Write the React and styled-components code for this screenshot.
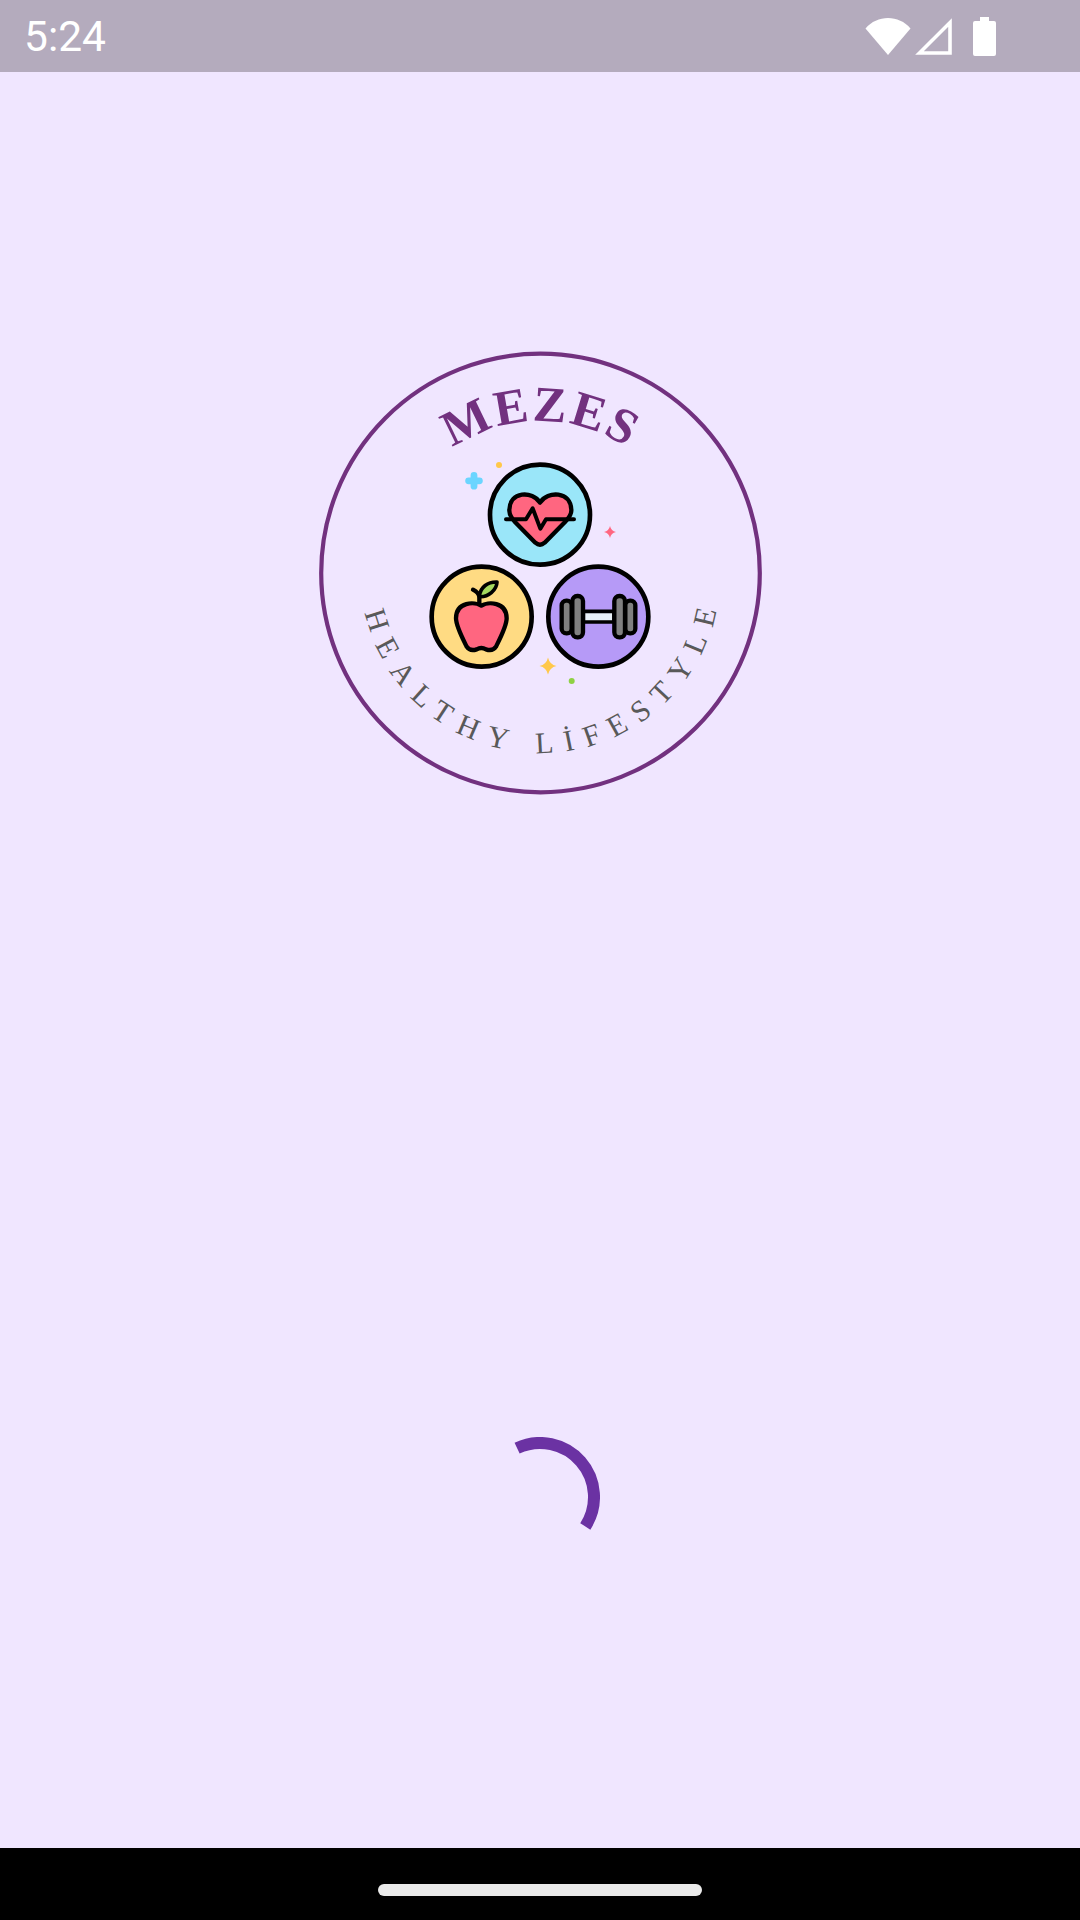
import React from "react";
import styled, { createGlobalStyle } from "styled-components";

const Global = createGlobalStyle`
  html, body { margin: 0; padding: 0; background: #f0e6ff; }
  #root { width: 1080px; height: 1920px; }
`;

const Screen = styled.div`
  width: 1080px;
  height: 1920px;
  display: flex;
  flex-direction: column;
  background: #f0e6ff;
  overflow: hidden;
`;

const StatusBar = styled.header`
  flex: 0 0 72px;
  display: flex;
  align-items: center;
  justify-content: space-between;
  padding: 0 84px 0 24px;
  background: #b4abbd;
`;

const Clock = styled.span`
  font-family: Roboto, sans-serif;
  font-size: 42.5px;
  line-height: 72px;
  color: #fff;
  position: relative;
  top: 1px;
`;

const StatusIcons = styled.div`
  display: flex;
  align-items: center;
  height: 72px;
  gap: 4px;
`;

const BatteryWrap = styled.div`
  display: flex;
  margin-left: 17px;
`;

const Main = styled.main`
  flex: 1;
  display: flex;
  flex-direction: column;
  align-items: center;
  padding-top: 268px;
`;

const LogoSvg = styled.svg`
  display: block;
  width: 460px;
  height: 460px;
`;

const Title = styled.text`
  font-family: "Liberation Serif", serif;
  font-weight: 700;
  font-size: 50px;
  letter-spacing: 2.4px;
  fill: #72317f;
`;

const Tagline = styled.text`
  font-family: "Liberation Serif", serif;
  font-size: 30px;
  letter-spacing: 11.6px;
  fill: #595959;
`;

const Spinner = styled.svg`
  display: block;
  width: 120px;
  height: 120px;
  margin-top: 637px;
`;

const NavBar = styled.footer`
  flex: 0 0 72px;
  display: flex;
  justify-content: center;
  align-items: flex-start;
  padding-top: 36px;
  box-sizing: border-box;
  background: #000;
`;

const HomePill = styled.div`
  width: 324px;
  height: 12px;
  border-radius: 6px;
  background: #eaeaea;
`;

const Sparkle = ({ x, y, r, fill }) => (
  <path
    d={`M${x} ${y - r}Q${x + r * 0.18} ${y - r * 0.18} ${x + r} ${y}Q${x + r * 0.18} ${y + r * 0.18} ${x} ${y + r}Q${x - r * 0.18} ${y + r * 0.18} ${x - r} ${y}Q${x - r * 0.18} ${y - r * 0.18} ${x} ${y - r}Z`}
    fill={fill}
  />
);

const Logo = () => (
  <LogoSvg viewBox="0 0 460 460">
    <defs>
      <path id="titleArc" d="M78.5 233A152 152 0 0 1 382.5 233" />
      <path id="tagArc" d="M50.5 233A180 180 0 0 0 410.5 233" />
    </defs>
    <circle cx="230.5" cy="233" r="219.3" fill="none" stroke="#72317f" strokeWidth="4.2" />
    <Title textAnchor="middle">
      <textPath href="#titleArc" startOffset="50%">MEZES</textPath>
    </Title>
    <Tagline textAnchor="middle">
      <textPath href="#tagArc" startOffset="51.2%">HEALTHY LİFESTYLE</textPath>
    </Tagline>

    <g transform="translate(110 100) scale(0.33333)" strokeLinejoin="round" strokeLinecap="round">
      {/* heart badge */}
      <circle cx="360" cy="224" r="150" fill="#9ae6f9" stroke="#000" strokeWidth="14" />
      <path
        d="M360 188C338 152 268 152 268 212C268 226 276 236 285 246L346 308Q360 320 374 308L435 246C444 236 454 226 454 212C454 152 382 152 360 188Z"
        fill="#ff6680"
        stroke="#000"
        strokeWidth="13"
      />
      <path d="M258 238H318L338 205L361 266L378 238H462" fill="none" stroke="#000" strokeWidth="12" />

      {/* apple badge */}
      <circle cx="185" cy="530" r="150" fill="#ffdb83" stroke="#000" strokeWidth="14" />
      <path d="M159 449Q176 458 178 470V492" fill="none" stroke="#000" strokeWidth="13" />
      <path d="M178 470C180 440 205 425 231 426C230 450 205 472 178 470Z" fill="#a5d85f" stroke="#000" strokeWidth="11" />
      <path
        d="M184 497C165 485 108 484 108 535C108 558 128 596 140 620Q150 635 170 628Q184 620 198 628Q218 635 228 620C240 596 260 558 260 535C260 484 203 485 184 497Z"
        fill="#ff6680"
        stroke="#000"
        strokeWidth="13"
      />

      {/* dumbbell badge */}
      <circle cx="535" cy="530" r="150" fill="#b69af7" stroke="#000" strokeWidth="14" />
      <rect x="490" y="514" width="92" height="32" fill="#e9f1f8" stroke="#000" strokeWidth="11" />
      <rect x="425" y="482" width="30" height="98" rx="14" fill="#808080" stroke="#000" strokeWidth="13" />
      <rect x="457" y="468" width="32" height="124" rx="15" fill="#808080" stroke="#000" strokeWidth="13" />
      <rect x="583" y="468" width="32" height="124" rx="15" fill="#808080" stroke="#000" strokeWidth="13" />
      <rect x="616" y="482" width="30" height="98" rx="14" fill="#808080" stroke="#000" strokeWidth="13" />
    </g>

    {/* decorations */}
    <circle cx="189" cy="125" r="3" fill="#ffc84a" />
    <path d="M169.4 137.4h-2v-2a3.4 3.4 0 0 0-6.8 0v2h-2a3.4 3.4 0 0 0 0 6.8h2v2a3.4 3.4 0 0 0 6.8 0v-2h2a3.4 3.4 0 0 0 0-6.8z" fill="#6bd5ff" />
    <Sparkle x={300} y={192} r={6} fill="#ff6680" />
    <Sparkle x={238} y={326} r={8.5} fill="#ffc84a" />
    <circle cx="261.7" cy="341" r="3" fill="#8ed144" />
  </LogoSvg>
);

const App = () => (
  <Screen>
    <Global />
    <StatusBar>
      <Clock>5:24</Clock>
      <StatusIcons>
        <svg width="46" height="38" viewBox="0 0 46 38">
          <path d="M0.5 11.5C12 -2.5 34 -2.5 45.5 11.5L23 38Z" fill="#fff" />
        </svg>
        <svg width="37" height="37" viewBox="0 0 37 37">
          <path d="M4.5 35L35 4.5V35Z" fill="none" stroke="#fff" strokeWidth="3.6" />
        </svg>
        <BatteryWrap>
          <svg width="23" height="39" viewBox="0 0 23 39">
            <path d="M7 0H16V4H21Q23 4 23 6V37Q23 39 21 39H2Q0 39 0 37V6Q0 4 2 4H7Z" fill="#fff" />
          </svg>
        </BatteryWrap>
      </StatusIcons>
    </StatusBar>
    <Main>
      <Logo />
      <Spinner viewBox="0 0 120 120">
        <path
          d={`M${60 - 54 * Math.sin((25.1 * Math.PI) / 180)} ${60 - 54 * Math.cos((25.1 * Math.PI) / 180)}A54 54 0 0 1 ${60 + 54 * Math.cos((33 * Math.PI) / 180)} ${60 + 54 * Math.sin((33 * Math.PI) / 180)}`}
          fill="none"
          stroke="#6b32a3"
          strokeWidth="12"
        />
      </Spinner>
    </Main>
    <NavBar>
      <HomePill />
    </NavBar>
  </Screen>
);

export default App;
